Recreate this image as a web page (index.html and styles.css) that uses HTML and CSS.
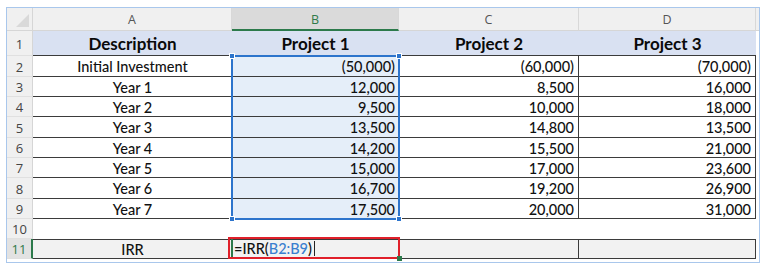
FILE: index.html
```html
<!DOCTYPE html>
<html>
<head>
<meta charset="utf-8">
<link rel="stylesheet" href="styles.css">
</head>
<body>
<div class="frame">
  <div class="sheet">
    <div class="corner"><span class="tri"></span></div>
    <div class="ch">A</div>
    <div class="ch ch-active">B</div>
    <div class="ch">C</div>
    <div class="ch">D</div>
    <div class="ch ch-fill"></div>

    <div class="rn">1</div>
    <div class="c title">Description</div>
    <div class="c title">Project 1</div>
    <div class="c title">Project 2</div>
    <div class="c title">Project 3</div>
    <div class="fill"></div>

    <div class="rn">2</div>
    <div class="c a">Initial Investment</div>
    <div class="c b num b-first">(50,000)
      <div class="selection">
        <span class="handle h-tl"></span>
        <span class="handle h-tr"></span>
        <span class="handle h-bl"></span>
        <span class="handle h-br"></span>
      </div>
    </div>
    <div class="c cc num">(60,000)</div>
    <div class="c d num">(70,000)</div>
    <div class="fill"></div>

    <div class="rn">3</div>
    <div class="c a">Year 1</div>
    <div class="c b num">12,000</div>
    <div class="c cc num">8,500</div>
    <div class="c d num">16,000</div>
    <div class="fill"></div>

    <div class="rn">4</div>
    <div class="c a">Year 2</div>
    <div class="c b num">9,500</div>
    <div class="c cc num">10,000</div>
    <div class="c d num">18,000</div>
    <div class="fill"></div>

    <div class="rn">5</div>
    <div class="c a">Year 3</div>
    <div class="c b num">13,500</div>
    <div class="c cc num">14,800</div>
    <div class="c d num">13,500</div>
    <div class="fill"></div>

    <div class="rn">6</div>
    <div class="c a">Year 4</div>
    <div class="c b num">14,200</div>
    <div class="c cc num">15,500</div>
    <div class="c d num">21,000</div>
    <div class="fill"></div>

    <div class="rn">7</div>
    <div class="c a">Year 5</div>
    <div class="c b num">15,000</div>
    <div class="c cc num">17,000</div>
    <div class="c d num">23,600</div>
    <div class="fill"></div>

    <div class="rn">8</div>
    <div class="c a">Year 6</div>
    <div class="c b num">16,700</div>
    <div class="c cc num">19,200</div>
    <div class="c d num">26,900</div>
    <div class="fill"></div>

    <div class="rn">9</div>
    <div class="c a">Year 7</div>
    <div class="c b num">17,500</div>
    <div class="c cc num">20,000</div>
    <div class="c d num">31,000</div>
    <div class="fill"></div>

    <div class="rn">10</div>
    <div class="c"></div>
    <div class="c"></div>
    <div class="c"></div>
    <div class="c"></div>
    <div class="fill"></div>

    <div class="rn rn-active">11</div>
    <div class="c irr irr-a">IRR</div>
    <div class="c irr irr-b">
      <div class="editbox"><span class="fx">=IRR(<span class="ref">B2:B9</span>)</span><span class="caret"></span><span class="fillhandle"></span></div>
    </div>
    <div class="c irr irr-c"></div>
    <div class="c irr irr-d"></div>
    <div class="fill"></div>
  </div>
</div>
</body>
</html>
```

FILE: styles.css
```css
* { box-sizing: border-box; }
html, body { margin: 0; padding: 0; background: #ffffff; }
body { width: 768px; height: 268px; overflow: hidden; }

.frame {
  margin: 7px 0 0 6px;
  width: 754px;
  height: 256px;
  border: 1px solid #a9c7ec;
  background: #ffffff;
}

.sheet {
  display: grid;
  grid-template-columns: 26px 199px 167px 180px 177px 3px;
  grid-template-rows: 23px 25px 21px 20px 20px 21px 20px 20px 21px 20px 20px 20px;
  font-family: "Lato", "Open Sans", sans-serif;
  font-size: 14.5px;
  font-weight: 500;
  color: #111111;
}

.corner {
  background: #f0f0f0;
  border-right: 1px solid #d6d6d6;
  border-bottom: 1px solid #d6d6d6;
  position: relative;
}
.tri {
  position: absolute;
  right: 3px;
  bottom: 3px;
  width: 0;
  height: 0;
  border-left: 13px solid transparent;
  border-bottom: 13px solid #d9d9d9;
}

.ch {
  background: #f0f0f0;
  border-right: 1px solid #d8d8d8;
  border-bottom: 1px solid #d6d6d6;
  display: flex;
  align-items: center;
  justify-content: center;
  font-family: "Open Sans", "Lato", sans-serif;
  font-size: 12.5px;
  font-weight: 400;
  color: #555555;
  padding-top: 1px;
}
.ch-active {
  background: #dadada;
  color: #2f7a4a;
  border-bottom: 2px solid #2c7a4b;
}
.ch-fill { border-right: 0; }

.rn {
  background: #f0f0f0;
  border-right: 1px solid #d6d6d6;
  border-bottom: 1px solid #e0e0e0;
  display: flex;
  align-items: center;
  justify-content: center;
  font-family: "Open Sans", "Lato", sans-serif;
  font-size: 13px;
  font-weight: 400;
  color: #444444;
  padding-top: 1px;
}
.rn-active {
  background: #e2e2e2;
  color: #2f7a4a;
  border-right: 2px solid #2c7a4b;
}

.c {
  display: flex;
  align-items: center;
  justify-content: center;
  padding: 1px 4px 0 4px;
  white-space: nowrap;
}
.fill { background: #ffffff; }

.title {
  background: #d9e1f2;
  font-weight: 700;
  font-size: 17px;
  border-bottom: 1px solid #3b3b3b;
  color: #0a0a0a;
}

.a, .b, .cc, .d { border-bottom: 1px solid #3b3b3b; }
.b { background: #e5eef9; }
.cc { border-right: 1px solid #3b3b3b; }
.d { border-right: 1px solid #3b3b3b; }
.num { justify-content: flex-end; }

.b-first { position: relative; z-index: 2; }

.irr {
  background: #f2f2f2;
  border-top: 1px solid #3b3b3b;
  border-bottom: 1px solid #3b3b3b;
}
.irr-c, .irr-d { border-right: 1px solid #3b3b3b; }
.irr-c { border-left: 1px solid #3b3b3b; }
.irr-b { position: relative; z-index: 2; }

.selection {
  position: absolute;
  left: -1px;
  right: -1px;
  top: -1px;
  height: 165px;
  border: 2px solid #2d74cc;
  pointer-events: none;
}
.handle {
  position: absolute;
  width: 6px;
  height: 6px;
  background: #2d74cc;
  border: 1px solid #ffffff;
}
.h-tl { left: -4px; top: -4px; }
.h-tr { right: -4px; top: -4px; }
.h-bl { left: -4px; bottom: -4px; }
.h-br { right: -4px; bottom: -4px; }

.editbox {
  position: absolute;
  left: -4px;
  right: -1px;
  top: -3px;
  bottom: -1px;
  border: 2px solid #e0202a;
  display: flex;
  align-items: center;
  padding: 1px 0 0 4px;
  font-size: 14.5px;
  color: #111111;
}
.editbox::before {
  content: "";
  position: absolute;
  left: 1px;
  top: 0;
  bottom: 0;
  width: 2px;
  background: #2c7a4b;
}
.ref { color: #3a7fcf; }
.caret {
  display: inline-block;
  width: 1px;
  height: 15px;
  background: #222222;
  margin-left: 2px;
}
.fillhandle {
  position: absolute;
  right: -4px;
  bottom: -4px;
  width: 5px;
  height: 5px;
  background: #2c7a4b;
}
```
